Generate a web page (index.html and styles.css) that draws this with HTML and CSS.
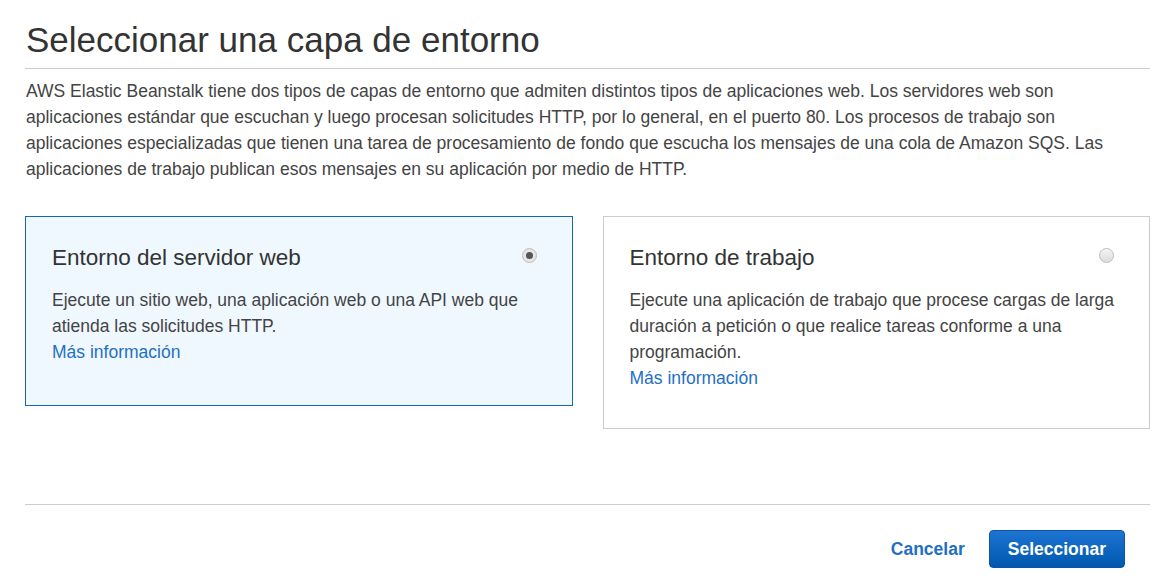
FILE: index.html
```html
<!DOCTYPE html>
<html lang="es">
<head>
    <meta charset="UTF-8">
    <meta name="viewport" content="width=device-width, initial-scale=1.0">
    <title>Seleccionar una capa de entorno</title>
    <link rel="stylesheet" href="styles.css">
</head>
<body>
    <div class="page">
        <h1 class="page-title">Seleccionar una capa de entorno</h1>
        <p class="intro">
            AWS Elastic Beanstalk tiene dos tipos de capas de entorno que admiten distintos tipos de aplicaciones web. Los servidores web son aplicaciones estándar que escuchan y luego procesan solicitudes HTTP, por lo general, en el puerto 80. Los procesos de trabajo son aplicaciones especializadas que tienen una tarea de procesamiento de fondo que escucha los mensajes de una cola de Amazon SQS. Las aplicaciones de trabajo publican esos mensajes en su aplicación por medio de HTTP.
        </p>

        <div class="tiers">
            <div class="tier selected">
                <div class="tier-head">
                    <div class="tier-title">Entorno del servidor web</div>
                    <span class="radio checked"></span>
                </div>
                <div class="tier-text">
                    Ejecute un sitio web, una aplicación web o una API web que atienda las solicitudes HTTP.<br>
                    <a href="#" class="link">Más información</a>
                </div>
            </div>
            <div class="tier">
                <div class="tier-head">
                    <div class="tier-title">Entorno de trabajo</div>
                    <span class="radio"></span>
                </div>
                <div class="tier-text">
                    Ejecute una aplicación de trabajo que procese cargas de larga duración a petición o que realice tareas conforme a una programación.<br>
                    <a href="#" class="link">Más información</a>
                </div>
            </div>
        </div>

        <div class="footer">
            <a href="#" class="btn-link">Cancelar</a>
            <button class="btn-primary">Seleccionar</button>
        </div>
    </div>
</body>
</html>
```

FILE: styles.css
```css
body {
    margin: 0;
    font-family: 'Liberation Sans', Arial, sans-serif;
    background: #ffffff;
    color: #444444;
}
.page {
    padding: 0 22px 0 25px;
}
.page-title {
    margin: 0;
    padding: 22px 0 10px 1px;
    font-size: 35px;
    font-weight: normal;
    line-height: 36px;
    color: #333333;
    border-bottom: 1px solid #cccccc;
}
.intro {
    margin: 0;
    padding: 9px 0 0 1px;
    font-size: 17.5px;
    line-height: 26px;
    color: #444444;
}
.tiers {
    display: flex;
    align-items: flex-start;
    gap: 30px;
    margin-top: 34px;
}
.tier {
    flex: 1;
    border: 1px solid #cccccc;
    padding: 25px 26px 37px 26px;
    background: #ffffff;
}
.tier.selected {
    border-color: #1a63b0;
    background: #f0f8ff;
    padding-bottom: 40px;
}
.tier-head {
    display: flex;
    justify-content: space-between;
    align-items: center;
}
.tier-title {
    font-size: 22.5px;
    line-height: 32px;
    color: #333333;
}
.radio {
    width: 13px;
    height: 13px;
    margin-right: 9px;
    margin-top: -6px;
    border-radius: 50%;
    border: 1px solid #bdbdbd;
    background: linear-gradient(#f4f4f4, #dcdcdc);
    display: flex;
    align-items: center;
    justify-content: center;
}
.radio.checked {
    background: #e6e6e6;
}
.radio.checked::after {
    content: "";
    width: 7px;
    height: 7px;
    border-radius: 50%;
    background: #555555;
}
.tier-text {
    margin-top: 13px;
    font-size: 17.5px;
    line-height: 26px;
    color: #444444;
}
.link {
    color: #1f6fc5;
    text-decoration: none;
}
.footer {
    margin-top: 75px;
    border-top: 1px solid #cccccc;
    padding-top: 25px;
    display: flex;
    justify-content: flex-end;
    align-items: center;
    gap: 24px;
    padding-right: 25px;
}
.btn-link {
    font-size: 17.5px;
    font-weight: bold;
    color: #1f6fc5;
    text-decoration: none;
}
.btn-primary {
    font-family: 'Liberation Sans', Arial, sans-serif;
    font-size: 17.5px;
    font-weight: bold;
    color: #ffffff;
    height: 38px;
    padding: 0 18px;
    border: 1px solid #0b56a4;
    border-radius: 4px;
    background: linear-gradient(#1d74d2, #0058ae);
}
```
